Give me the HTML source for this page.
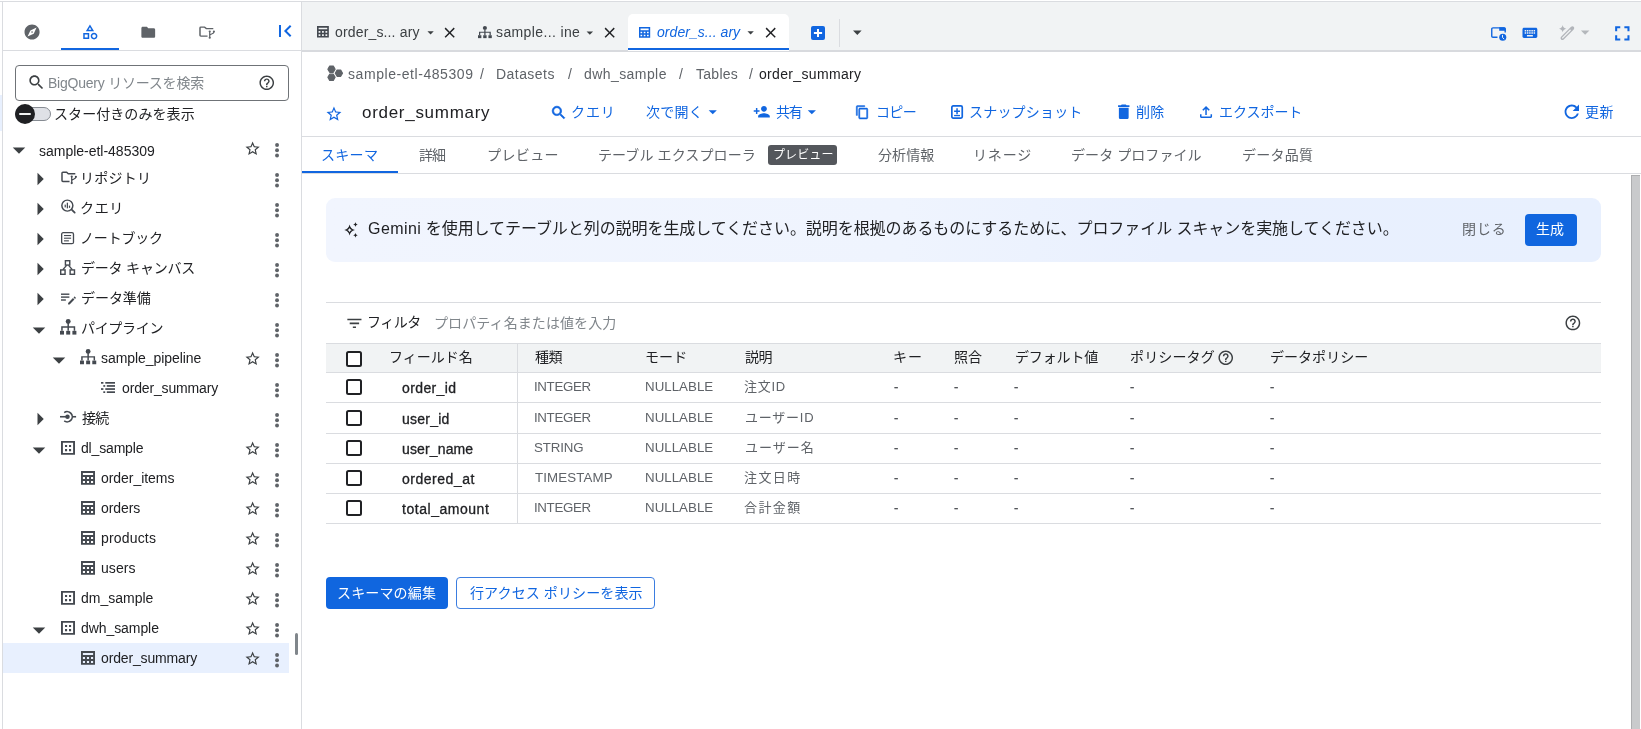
<!DOCTYPE html>
<html lang="ja"><head><meta charset="utf-8"><title>BigQuery</title>
<style>
html,body{margin:0;padding:0;background:#fff;}
body{width:1641px;height:729px;overflow:hidden;position:relative;font-family:"Liberation Sans","Noto Sans CJK JP",sans-serif;font-size:14px;color:#202124;}
.b{position:absolute;box-sizing:border-box;}
.i{position:absolute;display:block;overflow:visible;}
.t{position:absolute;white-space:nowrap;line-height:20px;height:20px;will-change:transform;}
</style></head><body>

<div class="b" style="left:0px;top:1px;width:1641px;height:1px;background:#dadce0"></div>
<div class="b" style="left:2px;top:1px;width:1px;height:728px;background:#dadce0"></div>
<div class="b" style="left:0px;top:95px;width:2px;height:36px;background:#e8f0fe"></div>
<div class="b" style="left:3px;top:50px;width:298px;height:1px;background:#dadce0"></div>
<div class="b" style="left:301px;top:2px;width:1px;height:727px;background:#dadce0"></div>
<svg class="i" style="left:22.89px;top:22.89px" width="18.12" height="18.12" viewBox="0 0 24 24" fill="#5f6368"><path d="M12 10.9c-.61 0-1.1.49-1.1 1.1s.49 1.1 1.1 1.1c.61 0 1.1-.49 1.1-1.1s-.49-1.1-1.1-1.1zM12 2C6.48 2 2 6.48 2 12s4.48 10 10 10 10-4.48 10-10S17.52 2 12 2zm2.19 12.19L6 18l3.81-8.19L18 6l-3.81 8.19z"/></svg>
<svg class="i" style="left:80.81px;top:23.34px" width="17.92" height="17.92" viewBox="0 0 24 24" fill="#1166e0"><path d="M12 2l-5.5 9h11L12 2zm0 3.84L13.93 9h-3.87L12 5.84zM17.5 13c-2.49 0-4.5 2.01-4.5 4.5s2.01 4.5 4.5 4.5 4.5-2.01 4.5-4.5-2.01-4.5-4.5-4.5zm0 7c-1.38 0-2.5-1.12-2.5-2.5s1.12-2.5 2.5-2.5 2.5 1.12 2.5 2.5-1.12 2.5-2.5 2.5zM3 21.5h8v-8H3v8zm2-6h4v4H5v-4z"/></svg>
<div class="b" style="left:61px;top:48px;width:58px;height:2px;background:#1166e0"></div>
<svg class="i" style="left:139.63px;top:23.63px" width="16.53" height="16.53" viewBox="0 0 24 24" fill="#5f6368"><path d="M10 4H4c-1.1 0-1.99.9-1.99 2L2 18c0 1.1.9 2 2 2h16c1.1 0 2-.9 2-2V8c0-1.1-.9-2-2-2h-8l-2-2z"/></svg>
<svg class="i" style="color:#5f6368;left:198.7px;top:26.3px" width="15.9" height="12.7" viewBox="0 0 16 14.2" preserveAspectRatio="none" fill="#5f6368" ><g fill="none" stroke="currentColor"><path stroke-width="1.500" stroke-linejoin="round" d="M14.400 2.900H7.300L5.700 1.300H1.900c-.5 0-.9.400-.9.900v8.200c0 .5.400.9.900.9h6.700"/><path stroke-width="1.250" d="M10.800 6.300v6.500M15 6.600c0 2.600-4.200 2-4.200 4"/></g><circle cx="10.800" cy="6" r="1.100"/><circle cx="10.800" cy="13.100" r="1.100"/><circle cx="15" cy="6.200" r="1.100"/></svg>
<svg class="i" style="left:273px;top:18.91px" width="23.98" height="23.98" viewBox="0 0 24 24" fill="#1166e0"><path d="M18.41 16.59L13.82 12l4.59-4.59L17 6l-6 6 6 6zM6 6h2v12H6z"/></svg>
<div class="b" style="left:15px;top:65px;width:274px;height:35.5px;border:1px solid #6f7377;border-radius:4px;background:#fff"></div>
<svg class="i" style="left:26.52px;top:72.52px" width="18.87" height="18.87" viewBox="0 0 24 24" fill="#3c4043"><path d="M15.5 14h-.79l-.28-.27C15.41 12.59 16 11.11 16 9.5 16 5.91 13.09 3 9.5 3S3 5.91 3 9.5 5.91 16 9.5 16c1.61 0 3.09-.59 4.23-1.57l.27.28v.79l5 4.99L20.49 19l-4.99-5zm-6 0C7.01 14 5 11.99 5 9.5S7.01 5 9.5 5 14 7.01 14 9.5 11.99 14 9.5 14z"/></svg>
<span class="t" id="t_search" style="left:48.25px;top:73.27px;font-size:14px;color:#80868b;letter-spacing:-0.225px;">BigQuery リソースを検索</span>
<svg class="i" style="left:258.24px;top:74.44px" width="17.52" height="17.52" viewBox="0 0 24 24" fill="#3c4043"><path d="M11 18h2v-2h-2v2zm1-16C6.48 2 2 6.48 2 12s4.48 10 10 10 10-4.48 10-10S17.52 2 12 2zm0 18c-4.41 0-8-3.59-8-8s3.59-8 8-8 8 3.59 8 8-3.59 8-8 8zm0-14c-2.21 0-4 1.79-4 4h2c0-1.1.9-2 2-2s2 .9 2 2c0 2-3 1.75-3 5h2c0-2.25 3-2.5 3-5 0-2.21-1.79-4-4-4z"/></svg>
<div class="b" style="left:15px;top:107px;width:36px;height:14px;background:#dfe1e6;border:1px solid #868b92;border-radius:7px"></div>
<div class="b" style="left:15px;top:104px;width:20px;height:20px;background:#1f2023;border-radius:10px"></div>
<div class="b" style="left:19px;top:112.6px;width:12px;height:2.7px;background:#f1f3f4;border-radius:1px"></div>
<span class="t" id="t_toggle" style="left:54.25px;top:104.25px;font-size:14px;color:#202124;letter-spacing:0.075px;">スター付きのみを表示</span>
<div class="b" style="left:3px;top:643px;width:286px;height:29.6px;background:#e8f0fe"></div>
<svg class="i" style="left:4px;top:135.2px" width="30" height="30" viewBox="0 0 24 24" fill="#3c4043"><path d="M7 10l5 5 5-5z"/></svg>
<span class="t" id="tr0" style="left:39px;top:141.25px;font-size:14px;color:#202124;letter-spacing:-0.014px;">sample-etl-485309</span>
<svg class="i" style="left:244.49px;top:140.44px" width="17.23" height="17.23" viewBox="0 0 24 24" fill="#3c4043"><path d="M22 9.24l-7.19-.62L12 2 9.19 8.63 2 9.24l5.46 4.73L5.82 21 12 17.27 18.18 21l-1.63-7.03L22 9.24zM12 15.4l-3.76 2.27 1-4.28-3.32-2.88 4.38-.38L12 6.1l1.71 4.04 4.38.38-3.32 2.88 1 4.28L12 15.4z"/></svg>
<svg class="i" style="color:#5f6368;left:274.95px;top:142.75px" width="4.1" height="14.5" viewBox="0 0 4.1 14.5" preserveAspectRatio="none" fill="#5f6368"><circle cx="2.050" cy="2.050" r="1.950"/><circle cx="2.050" cy="7.250" r="1.950"/><circle cx="2.050" cy="12.450" r="1.950"/></svg>
<svg class="i" style="left:25px;top:163.75px" width="30" height="30" viewBox="0 0 24 24" fill="#3c4043"><path d="M10 17l5-5-5-5v10z"/></svg>
<svg class="i" style="color:#444950;left:60.6px;top:171.25px" width="15.9" height="13.15" viewBox="0 0 16 14.2" preserveAspectRatio="none" fill="#444950"><g fill="none" stroke="currentColor"><path stroke-width="1.500" stroke-linejoin="round" d="M14.400 2.900H7.300L5.700 1.300H1.900c-.5 0-.9.400-.9.900v8.200c0 .5.400.9.900.9h6.700"/><path stroke-width="1.250" d="M10.800 6.300v6.500M15 6.600c0 2.600-4.200 2-4.200 4"/></g><circle cx="10.800" cy="6" r="1.100"/><circle cx="10.800" cy="13.100" r="1.100"/><circle cx="15" cy="6.200" r="1.100"/></svg>
<span class="t" id="tr1" style="left:80px;top:167.5px;font-size:14px;color:#202124;letter-spacing:0.28px;">リポジトリ</span>
<svg class="i" style="color:#5f6368;left:274.95px;top:172.75px" width="4.1" height="14.5" viewBox="0 0 4.1 14.5" preserveAspectRatio="none" fill="#5f6368"><circle cx="2.050" cy="2.050" r="1.950"/><circle cx="2.050" cy="7.250" r="1.950"/><circle cx="2.050" cy="12.450" r="1.950"/></svg>
<svg class="i" style="left:25px;top:193.6px" width="30" height="30" viewBox="0 0 24 24" fill="#3c4043"><path d="M10 17l5-5-5-5v10z"/></svg>
<svg class="i" style="color:#444950;left:60.6px;top:199.4px" width="14.65" height="14.6" viewBox="0 0 15 15" preserveAspectRatio="none" fill="#444950"><circle cx="6.500" cy="6.800" r="5.650" fill="none" stroke="currentColor" stroke-width="1.500"/><path d="M10.300 11.500l1.300-1.300 3.100 3.100c.36.360.36.940 0 1.300s-.940.360-1.300 0z"/><rect x="3.700" y="5.800" width="1.250" height="2.800"/><rect x="5.900" y="3.800" width="1.250" height="5.800"/><rect x="8.100" y="6.800" width="1.250" height="2.300"/></svg>
<span class="t" id="tr2" style="left:80px;top:197.5px;font-size:14px;color:#202124;letter-spacing:0.675px;">クエリ</span>
<svg class="i" style="color:#5f6368;left:274.95px;top:202.75px" width="4.1" height="14.5" viewBox="0 0 4.1 14.5" preserveAspectRatio="none" fill="#5f6368"><circle cx="2.050" cy="2.050" r="1.950"/><circle cx="2.050" cy="7.250" r="1.950"/><circle cx="2.050" cy="12.450" r="1.950"/></svg>
<svg class="i" style="left:25px;top:224px" width="30" height="30" viewBox="0 0 24 24" fill="#3c4043"><path d="M10 17l5-5-5-5v10z"/></svg>
<svg class="i" style="color:#444950;left:61.25px;top:231.6px" width="13.15" height="12.3" viewBox="0 0 13 12.3" preserveAspectRatio="none" fill="#444950"><rect x=".65" y=".65" width="11.700" height="11" rx="1.500" fill="none" stroke="currentColor" stroke-width="1.300"/><rect x="3" y="3" width="7" height="1.100"/><rect x="3" y="5.650" width="7" height="1.100"/><rect x="3" y="8.300" width="4.800" height="1.100"/></svg>
<span class="t" id="tr3" style="left:80px;top:227.5px;font-size:14px;color:#202124;letter-spacing:-0.18px;">ノートブック</span>
<svg class="i" style="color:#5f6368;left:274.95px;top:232.75px" width="4.1" height="14.5" viewBox="0 0 4.1 14.5" preserveAspectRatio="none" fill="#5f6368"><circle cx="2.050" cy="2.050" r="1.950"/><circle cx="2.050" cy="7.250" r="1.950"/><circle cx="2.050" cy="12.450" r="1.950"/></svg>
<svg class="i" style="left:25px;top:253.8px" width="30" height="30" viewBox="0 0 24 24" fill="#3c4043"><path d="M10 17l5-5-5-5v10z"/></svg>
<svg class="i" style="color:#444950;left:60.4px;top:260.4px" width="15.2" height="15" viewBox="0 0 15 14.8" preserveAspectRatio="none" fill="#444950"><g fill="none" stroke="currentColor" stroke-width="1.400"><rect x="5.350" y=".7" width="4.300" height="4.300"/><rect x=".7" y="9.800" width="4.300" height="4.300"/><rect x="10" y="9.800" width="4.300" height="4.300"/><path d="M6.500 5.300L2.850 9.500M8.500 5.300l3.650 4.200"/></g></svg>
<span class="t" id="tr4" style="left:81px;top:257.5px;font-size:14px;color:#202124;letter-spacing:-0.197px;">データ キャンバス</span>
<svg class="i" style="color:#5f6368;left:274.95px;top:262.75px" width="4.1" height="14.5" viewBox="0 0 4.1 14.5" preserveAspectRatio="none" fill="#5f6368"><circle cx="2.050" cy="2.050" r="1.950"/><circle cx="2.050" cy="7.250" r="1.950"/><circle cx="2.050" cy="12.450" r="1.950"/></svg>
<svg class="i" style="left:25px;top:284px" width="30" height="30" viewBox="0 0 24 24" fill="#3c4043"><path d="M10 17l5-5-5-5v10z"/></svg>
<svg class="i" style="color:#444950;left:60.6px;top:293.25px" width="14.8" height="11.5" viewBox="0 0 15.2 11.5" preserveAspectRatio="none" fill="#444950"><rect x="0" y=".5" width="8.600" height="1.400"/><rect x="0" y="3.400" width="8.600" height="1.400"/><rect x="0" y="6.300" width="5" height="1.400"/><path d="M7.300 11.500v-1.500l5-5 1.500 1.500-5 5z M12.900 4.400l.7-.7c.2-.2.500-.2.700 0l.8.800c.2.200.2.500 0 .7l-.7.700z"/></svg>
<span class="t" id="tr5" style="left:81px;top:287.5px;font-size:14px;color:#202124;letter-spacing:-0.055px;">データ準備</span>
<svg class="i" style="color:#5f6368;left:274.95px;top:292.75px" width="4.1" height="14.5" viewBox="0 0 4.1 14.5" preserveAspectRatio="none" fill="#5f6368"><circle cx="2.050" cy="2.050" r="1.950"/><circle cx="2.050" cy="7.250" r="1.950"/><circle cx="2.050" cy="12.450" r="1.950"/></svg>
<svg class="i" style="left:24px;top:315px" width="30" height="30" viewBox="0 0 24 24" fill="#3c4043"><path d="M7 10l5 5 5-5z"/></svg>
<svg class="i" style="color:#444950;left:59.6px;top:318.9px" width="16.4" height="15.6" viewBox="0 0 16.4 15.4" preserveAspectRatio="none" fill="#444950"><circle cx="8.200" cy="2.450" r="2.450"/><path d="M7.450 4h1.500v3.200h6.250v4.500h-1.500v-3h-4.750v3h-1.500v-3H2.700v3H1.200V7.200h6.250z"/><rect x="0" y="11.700" width="4" height="3.700"/><rect x="6.200" y="11.700" width="4" height="3.700"/><rect x="12.400" y="11.700" width="4" height="3.700"/></svg>
<span class="t" id="tr6" style="left:80.5px;top:317.5px;font-size:14px;color:#202124;letter-spacing:-0.315px;">パイプライン</span>
<svg class="i" style="color:#5f6368;left:274.95px;top:322.75px" width="4.1" height="14.5" viewBox="0 0 4.1 14.5" preserveAspectRatio="none" fill="#5f6368"><circle cx="2.050" cy="2.050" r="1.950"/><circle cx="2.050" cy="7.250" r="1.950"/><circle cx="2.050" cy="12.450" r="1.950"/></svg>
<svg class="i" style="left:44px;top:345px" width="30" height="30" viewBox="0 0 24 24" fill="#3c4043"><path d="M7 10l5 5 5-5z"/></svg>
<svg class="i" style="color:#444950;left:79.75px;top:349.25px" width="16.25" height="15.25" viewBox="0 0 16.4 15.4" preserveAspectRatio="none" fill="#444950"><circle cx="8.200" cy="2.450" r="2.450"/><path d="M7.450 4h1.500v3.200h6.250v4.500h-1.500v-3h-4.750v3h-1.500v-3H2.700v3H1.200V7.200h6.250z"/><rect x="0" y="11.700" width="4" height="3.700"/><rect x="6.200" y="11.700" width="4" height="3.700"/><rect x="12.400" y="11.700" width="4" height="3.700"/></svg>
<span class="t" id="tr7" style="left:101px;top:348.22px;font-size:14px;color:#202124;letter-spacing:-0.064px;">sample_pipeline</span>
<svg class="i" style="left:244.49px;top:350.44px" width="17.23" height="17.23" viewBox="0 0 24 24" fill="#3c4043"><path d="M22 9.24l-7.19-.62L12 2 9.19 8.63 2 9.24l5.46 4.73L5.82 21 12 17.27 18.18 21l-1.63-7.03L22 9.24zM12 15.4l-3.76 2.27 1-4.28-3.32-2.88 4.38-.38L12 6.1l1.71 4.04 4.38.38-3.32 2.88 1 4.28L12 15.4z"/></svg>
<svg class="i" style="color:#5f6368;left:274.95px;top:352.75px" width="4.1" height="14.5" viewBox="0 0 4.1 14.5" preserveAspectRatio="none" fill="#5f6368"><circle cx="2.050" cy="2.050" r="1.950"/><circle cx="2.050" cy="7.250" r="1.950"/><circle cx="2.050" cy="12.450" r="1.950"/></svg>
<svg class="i" style="color:#444950;left:101.1px;top:382px" width="14" height="11" viewBox="0 0 14 11" preserveAspectRatio="none" fill="#444950"><rect x="4.300" y="0" width="9.700" height="1.700"/><rect x="5.800" y="3.100" width="8.200" height="1.700"/><rect x="4.300" y="6.200" width="9.700" height="1.700"/><rect x="5.800" y="9.300" width="8.200" height="1.700"/><rect x="0" y="0" width="2.400" height="1.700"/><rect x="2.300" y="3.100" width="1.900" height="1.700"/><rect x="0" y="6.200" width="2.400" height="1.700"/><rect x="2.300" y="9.300" width="1.900" height="1.700"/></svg>
<span class="t" id="tr8" style="left:122px;top:378.22px;font-size:14px;color:#202124;letter-spacing:-0.15px;">order_summary</span>
<svg class="i" style="color:#5f6368;left:274.95px;top:382.75px" width="4.1" height="14.5" viewBox="0 0 4.1 14.5" preserveAspectRatio="none" fill="#5f6368"><circle cx="2.050" cy="2.050" r="1.950"/><circle cx="2.050" cy="7.250" r="1.950"/><circle cx="2.050" cy="12.450" r="1.950"/></svg>
<svg class="i" style="left:25px;top:403.8px" width="30" height="30" viewBox="0 0 24 24" fill="#3c4043"><path d="M10 17l5-5-5-5v10z"/></svg>
<svg class="i" style="color:#444950;left:59.9px;top:411.1px" width="16.1" height="11.7" viewBox="0 0 16.1 11.7" preserveAspectRatio="none" fill="#444950"><rect x="0" y="4.950" width="6.300" height="1.600"/><rect x="12.600" y="4.950" width="3.500" height="1.600"/><circle cx="7.500" cy="5.750" r="2.250"/><path d="M4.200 1.600A5.100 5.100 0 1 1 4.200 9.900" fill="none" stroke="currentColor" stroke-width="1.600"/></svg>
<span class="t" id="tr9" style="left:81.5px;top:407.5px;font-size:14px;color:#202124;letter-spacing:-0.675px;">接続</span>
<svg class="i" style="color:#5f6368;left:274.95px;top:412.75px" width="4.1" height="14.5" viewBox="0 0 4.1 14.5" preserveAspectRatio="none" fill="#5f6368"><circle cx="2.050" cy="2.050" r="1.950"/><circle cx="2.050" cy="7.250" r="1.950"/><circle cx="2.050" cy="12.450" r="1.950"/></svg>
<svg class="i" style="left:24px;top:435px" width="30" height="30" viewBox="0 0 24 24" fill="#3c4043"><path d="M7 10l5 5 5-5z"/></svg>
<svg class="i" style="color:#444950;left:61px;top:441.1px" width="14" height="13.8" viewBox="0 0 14 14" preserveAspectRatio="none" fill="#444950"><path fill-rule="evenodd" d="M0 0h14v14H0z M1.900 1.900v10.200h10.200V1.900z"/><path d="M4 4.100h2.100v2.100H4z M8 4.100h2.100v2.100H8z M4 8.200h2.100v2.100H4z M8 8.200h2.100v2.100H8z"/></svg>
<span class="t" id="tr10" style="left:81px;top:438.22px;font-size:14px;color:#202124;letter-spacing:-0.168px;">dl_sample</span>
<svg class="i" style="left:244.49px;top:440.44px" width="17.23" height="17.23" viewBox="0 0 24 24" fill="#3c4043"><path d="M22 9.24l-7.19-.62L12 2 9.19 8.63 2 9.24l5.46 4.73L5.82 21 12 17.27 18.18 21l-1.63-7.03L22 9.24zM12 15.4l-3.76 2.27 1-4.28-3.32-2.88 4.38-.38L12 6.1l1.71 4.04 4.38.38-3.32 2.88 1 4.28L12 15.4z"/></svg>
<svg class="i" style="color:#5f6368;left:274.95px;top:442.75px" width="4.1" height="14.5" viewBox="0 0 4.1 14.5" preserveAspectRatio="none" fill="#5f6368"><circle cx="2.050" cy="2.050" r="1.950"/><circle cx="2.050" cy="7.250" r="1.950"/><circle cx="2.050" cy="12.450" r="1.950"/></svg>
<svg class="i" style="color:#444950;left:81px;top:471.1px" width="14" height="13.8" viewBox="0 0 14 14" preserveAspectRatio="none" fill="#444950"><path fill-rule="evenodd" d="M0 0h14v14H0z M1.9 2h10.200v2.100H1.900z M1.900 6.100h2.100v2H1.900z M5.950 6.100h2.100v2H5.950z M10 6.100h2.100v2H10z M1.900 10.100h2.100v2H1.900z M5.950 10.100h2.100v2H5.950z M10 10.100h2.100v2H10z"/></svg>
<span class="t" id="tr11" style="left:101px;top:468.22px;font-size:14px;color:#202124;letter-spacing:-0.045px;">order_items</span>
<svg class="i" style="left:244.49px;top:470.44px" width="17.23" height="17.23" viewBox="0 0 24 24" fill="#3c4043"><path d="M22 9.24l-7.19-.62L12 2 9.19 8.63 2 9.24l5.46 4.73L5.82 21 12 17.27 18.18 21l-1.63-7.03L22 9.24zM12 15.4l-3.76 2.27 1-4.28-3.32-2.88 4.38-.38L12 6.1l1.71 4.04 4.38.38-3.32 2.88 1 4.28L12 15.4z"/></svg>
<svg class="i" style="color:#5f6368;left:274.95px;top:472.75px" width="4.1" height="14.5" viewBox="0 0 4.1 14.5" preserveAspectRatio="none" fill="#5f6368"><circle cx="2.050" cy="2.050" r="1.950"/><circle cx="2.050" cy="7.250" r="1.950"/><circle cx="2.050" cy="12.450" r="1.950"/></svg>
<svg class="i" style="color:#444950;left:81px;top:501px" width="14" height="13.85" viewBox="0 0 14 14" preserveAspectRatio="none" fill="#444950"><path fill-rule="evenodd" d="M0 0h14v14H0z M1.9 2h10.200v2.100H1.900z M1.900 6.100h2.100v2H1.900z M5.950 6.100h2.100v2H5.950z M10 6.100h2.100v2H10z M1.900 10.100h2.100v2H1.900z M5.950 10.100h2.100v2H5.950z M10 10.100h2.100v2H10z"/></svg>
<span class="t" id="tr12" style="left:101px;top:498.22px;font-size:14px;color:#202124;letter-spacing:-0.09px;">orders</span>
<svg class="i" style="left:244.49px;top:500.44px" width="17.23" height="17.23" viewBox="0 0 24 24" fill="#3c4043"><path d="M22 9.24l-7.19-.62L12 2 9.19 8.63 2 9.24l5.46 4.73L5.82 21 12 17.27 18.18 21l-1.63-7.03L22 9.24zM12 15.4l-3.76 2.27 1-4.28-3.32-2.88 4.38-.38L12 6.1l1.71 4.04 4.38.38-3.32 2.88 1 4.28L12 15.4z"/></svg>
<svg class="i" style="color:#5f6368;left:274.95px;top:502.75px" width="4.1" height="14.5" viewBox="0 0 4.1 14.5" preserveAspectRatio="none" fill="#5f6368"><circle cx="2.050" cy="2.050" r="1.950"/><circle cx="2.050" cy="7.250" r="1.950"/><circle cx="2.050" cy="12.450" r="1.950"/></svg>
<svg class="i" style="color:#444950;left:81px;top:531px" width="14" height="13.85" viewBox="0 0 14 14" preserveAspectRatio="none" fill="#444950"><path fill-rule="evenodd" d="M0 0h14v14H0z M1.9 2h10.200v2.100H1.900z M1.900 6.100h2.100v2H1.900z M5.950 6.100h2.100v2H5.950z M10 6.100h2.100v2H10z M1.900 10.100h2.100v2H1.900z M5.950 10.100h2.100v2H5.950z M10 10.100h2.100v2H10z"/></svg>
<span class="t" id="tr13" style="left:101px;top:528.22px;font-size:14px;color:#202124;letter-spacing:0.171px;">products</span>
<svg class="i" style="left:244.49px;top:530.44px" width="17.23" height="17.23" viewBox="0 0 24 24" fill="#3c4043"><path d="M22 9.24l-7.19-.62L12 2 9.19 8.63 2 9.24l5.46 4.73L5.82 21 12 17.27 18.18 21l-1.63-7.03L22 9.24zM12 15.4l-3.76 2.27 1-4.28-3.32-2.88 4.38-.38L12 6.1l1.71 4.04 4.38.38-3.32 2.88 1 4.28L12 15.4z"/></svg>
<svg class="i" style="color:#5f6368;left:274.95px;top:532.75px" width="4.1" height="14.5" viewBox="0 0 4.1 14.5" preserveAspectRatio="none" fill="#5f6368"><circle cx="2.050" cy="2.050" r="1.950"/><circle cx="2.050" cy="7.250" r="1.950"/><circle cx="2.050" cy="12.450" r="1.950"/></svg>
<svg class="i" style="color:#444950;left:81px;top:561px" width="14" height="13.85" viewBox="0 0 14 14" preserveAspectRatio="none" fill="#444950"><path fill-rule="evenodd" d="M0 0h14v14H0z M1.9 2h10.200v2.100H1.900z M1.900 6.100h2.100v2H1.900z M5.950 6.100h2.100v2H5.950z M10 6.100h2.100v2H10z M1.900 10.100h2.100v2H1.900z M5.950 10.100h2.100v2H5.950z M10 10.100h2.100v2H10z"/></svg>
<span class="t" id="tr14" style="left:101px;top:558.22px;font-size:14px;color:#202124;letter-spacing:0.055px;">users</span>
<svg class="i" style="left:244.49px;top:560.44px" width="17.23" height="17.23" viewBox="0 0 24 24" fill="#3c4043"><path d="M22 9.24l-7.19-.62L12 2 9.19 8.63 2 9.24l5.46 4.73L5.82 21 12 17.27 18.18 21l-1.63-7.03L22 9.24zM12 15.4l-3.76 2.27 1-4.28-3.32-2.88 4.38-.38L12 6.1l1.71 4.04 4.38.38-3.32 2.88 1 4.28L12 15.4z"/></svg>
<svg class="i" style="color:#5f6368;left:274.95px;top:562.75px" width="4.1" height="14.5" viewBox="0 0 4.1 14.5" preserveAspectRatio="none" fill="#5f6368"><circle cx="2.050" cy="2.050" r="1.950"/><circle cx="2.050" cy="7.250" r="1.950"/><circle cx="2.050" cy="12.450" r="1.950"/></svg>
<svg class="i" style="color:#444950;left:61px;top:591.1px" width="14" height="13.8" viewBox="0 0 14 14" preserveAspectRatio="none" fill="#444950"><path fill-rule="evenodd" d="M0 0h14v14H0z M1.900 1.900v10.200h10.200V1.900z"/><path d="M4 4.100h2.100v2.100H4z M8 4.100h2.100v2.100H8z M4 8.200h2.100v2.100H4z M8 8.200h2.100v2.100H8z"/></svg>
<span class="t" id="tr15" style="left:81px;top:588.22px;font-size:14px;color:#202124;letter-spacing:-0.001px;">dm_sample</span>
<svg class="i" style="left:244.49px;top:590.44px" width="17.23" height="17.23" viewBox="0 0 24 24" fill="#3c4043"><path d="M22 9.24l-7.19-.62L12 2 9.19 8.63 2 9.24l5.46 4.73L5.82 21 12 17.27 18.18 21l-1.63-7.03L22 9.24zM12 15.4l-3.76 2.27 1-4.28-3.32-2.88 4.38-.38L12 6.1l1.71 4.04 4.38.38-3.32 2.88 1 4.28L12 15.4z"/></svg>
<svg class="i" style="color:#5f6368;left:274.95px;top:592.75px" width="4.1" height="14.5" viewBox="0 0 4.1 14.5" preserveAspectRatio="none" fill="#5f6368"><circle cx="2.050" cy="2.050" r="1.950"/><circle cx="2.050" cy="7.250" r="1.950"/><circle cx="2.050" cy="12.450" r="1.950"/></svg>
<svg class="i" style="left:24px;top:615px" width="30" height="30" viewBox="0 0 24 24" fill="#3c4043"><path d="M7 10l5 5 5-5z"/></svg>
<svg class="i" style="color:#444950;left:61px;top:621.1px" width="14" height="13.8" viewBox="0 0 14 14" preserveAspectRatio="none" fill="#444950"><path fill-rule="evenodd" d="M0 0h14v14H0z M1.900 1.900v10.200h10.200V1.900z"/><path d="M4 4.100h2.100v2.100H4z M8 4.100h2.100v2.100H8z M4 8.200h2.100v2.100H4z M8 8.200h2.100v2.100H8z"/></svg>
<span class="t" id="tr16" style="left:81px;top:618.22px;font-size:14px;color:#202124;letter-spacing:-0.075px;">dwh_sample</span>
<svg class="i" style="left:244.49px;top:620.44px" width="17.23" height="17.23" viewBox="0 0 24 24" fill="#3c4043"><path d="M22 9.24l-7.19-.62L12 2 9.19 8.63 2 9.24l5.46 4.73L5.82 21 12 17.27 18.18 21l-1.63-7.03L22 9.24zM12 15.4l-3.76 2.27 1-4.28-3.32-2.88 4.38-.38L12 6.1l1.71 4.04 4.38.38-3.32 2.88 1 4.28L12 15.4z"/></svg>
<svg class="i" style="color:#5f6368;left:274.95px;top:622.75px" width="4.1" height="14.5" viewBox="0 0 4.1 14.5" preserveAspectRatio="none" fill="#5f6368"><circle cx="2.050" cy="2.050" r="1.950"/><circle cx="2.050" cy="7.250" r="1.950"/><circle cx="2.050" cy="12.450" r="1.950"/></svg>
<svg class="i" style="color:#444950;left:81px;top:651px" width="14" height="13.85" viewBox="0 0 14 14" preserveAspectRatio="none" fill="#444950"><path fill-rule="evenodd" d="M0 0h14v14H0z M1.9 2h10.200v2.100H1.900z M1.900 6.100h2.100v2H1.900z M5.950 6.100h2.100v2H5.950z M10 6.100h2.100v2H10z M1.900 10.100h2.100v2H1.900z M5.950 10.100h2.100v2H5.950z M10 10.100h2.100v2H10z"/></svg>
<span class="t" id="tr17" style="left:101px;top:648.22px;font-size:14px;color:#202124;letter-spacing:-0.15px;">order_summary</span>
<svg class="i" style="left:244.49px;top:650.44px" width="17.23" height="17.23" viewBox="0 0 24 24" fill="#3c4043"><path d="M22 9.24l-7.19-.62L12 2 9.19 8.63 2 9.24l5.46 4.73L5.82 21 12 17.27 18.18 21l-1.63-7.03L22 9.24zM12 15.4l-3.76 2.27 1-4.28-3.32-2.88 4.38-.38L12 6.1l1.71 4.04 4.38.38-3.32 2.88 1 4.28L12 15.4z"/></svg>
<svg class="i" style="color:#5f6368;left:274.95px;top:652.75px" width="4.1" height="14.5" viewBox="0 0 4.1 14.5" preserveAspectRatio="none" fill="#5f6368"><circle cx="2.050" cy="2.050" r="1.950"/><circle cx="2.050" cy="7.250" r="1.950"/><circle cx="2.050" cy="12.450" r="1.950"/></svg>
<div class="b" style="left:295px;top:633px;width:3px;height:22px;background:#80868b;border-radius:1.5px"></div>
<div class="b" style="left:302px;top:2px;width:1339px;height:48px;background:#f1f3f4"></div>
<div class="b" style="left:302px;top:50px;width:1339px;height:2px;background:#d8dade"></div>
<svg class="i" style="color:#444950;left:316.9px;top:26.25px" width="11.85" height="11.5" viewBox="0 0 14 14" preserveAspectRatio="none" fill="#444950"><path fill-rule="evenodd" d="M0 0h14v14H0z M1.9 2h10.200v2.100H1.900z M1.900 6.100h2.100v2H1.900z M5.950 6.100h2.100v2H5.950z M10 6.100h2.100v2H10z M1.900 10.100h2.100v2H1.900z M5.950 10.100h2.100v2H5.950z M10 10.100h2.100v2H10z"/></svg>
<span class="t" id="tab1" style="left:334.8px;top:21.95px;font-size:14px;color:#3c4043;letter-spacing:0.152px;">order_s... ary</span>
<svg class="i" style="left:422.58px;top:24.79px" width="15.18" height="15.18" viewBox="0 0 24 24" fill="#3c4043"><path d="M7 10l5 5 5-5z"/></svg>
<svg class="i" style="left:441.2px;top:24.07px" width="17.36" height="17.36" viewBox="0 0 24 24" fill="#202124"><path d="M19 6.41L17.59 5 12 10.59 6.41 5 5 6.41 10.59 12 5 17.59 6.41 19 12 13.41 17.59 19 19 17.59 13.41 12z"/></svg>
<svg class="i" style="color:#444950;left:478.1px;top:25.6px" width="13.8" height="12.15" viewBox="0 0 16.4 15.4" preserveAspectRatio="none" fill="#444950"><circle cx="8.200" cy="2.450" r="2.450"/><path d="M7.450 4h1.500v3.200h6.250v4.500h-1.500v-3h-4.750v3h-1.500v-3H2.700v3H1.200V7.200h6.250z"/><rect x="0" y="11.700" width="4" height="3.700"/><rect x="6.200" y="11.700" width="4" height="3.700"/><rect x="12.400" y="11.700" width="4" height="3.700"/></svg>
<span class="t" id="tab2" style="left:496px;top:21.95px;font-size:14px;color:#3c4043;letter-spacing:0.375px;">sample... ine</span>
<svg class="i" style="left:582.2px;top:24.57px" width="15.6" height="15.6" viewBox="0 0 24 24" fill="#3c4043"><path d="M7 10l5 5 5-5z"/></svg>
<svg class="i" style="left:601.45px;top:24.07px" width="17.36" height="17.36" viewBox="0 0 24 24" fill="#202124"><path d="M19 6.41L17.59 5 12 10.59 6.41 5 5 6.41 10.59 12 5 17.59 6.41 19 12 13.41 17.59 19 19 17.59 13.41 12z"/></svg>
<div class="b" style="left:628px;top:14px;width:161px;height:37px;background:#fff;border-radius:5px 5px 0 0"></div>
<div class="b" style="left:628px;top:48px;width:161px;height:2px;background:#1166e0"></div>
<svg class="i" style="color:#1166e0;left:639.4px;top:26.5px" width="11.2" height="10.75" viewBox="0 0 14 14" preserveAspectRatio="none" fill="#1166e0"><path fill-rule="evenodd" d="M0 0h14v14H0z M1.9 2h10.200v2.100H1.900z M1.900 6.100h2.100v2H1.900z M5.950 6.100h2.100v2H5.950z M10 6.100h2.100v2H10z M1.900 10.100h2.100v2H1.900z M5.950 10.100h2.100v2H5.950z M10 10.100h2.100v2H10z"/></svg>
<span class="t" id="tab3" style="left:656.8px;top:21.95px;font-size:14px;color:#1166e0;letter-spacing:0.049px;font-style:italic;">order_s... ary</span>
<svg class="i" style="left:743.43px;top:24.76px" width="15.24" height="15.24" viewBox="0 0 24 24" fill="#3c4043"><path d="M7 10l5 5 5-5z"/></svg>
<svg class="i" style="left:762.45px;top:24.07px" width="17.36" height="17.36" viewBox="0 0 24 24" fill="#202124"><path d="M19 6.41L17.59 5 12 10.59 6.41 5 5 6.41 10.59 12 5 17.59 6.41 19 12 13.41 17.59 19 19 17.59 13.41 12z"/></svg>
<svg class="i" style="color:#1166e0;left:811.05px;top:25.95px" width="14" height="14" viewBox="0 0 14 14" preserveAspectRatio="none" fill="#1166e0"><rect x="0" y="0" width="14" height="14" rx="2"/><path d="M6 3h2v3h3.100v2H8v3H6V8H2.900V6H6z" fill="#fff"/></svg>
<div class="b" style="left:839px;top:19px;width:1px;height:28px;background:#dadce0"></div>
<svg class="i" style="left:846.73px;top:22.18px" width="20.64" height="20.64" viewBox="0 0 24 24" fill="#3c4043"><path d="M7 10l5 5 5-5z"/></svg>
<svg class="i" style="color:#1166e0;left:1490.5px;top:27.2px" width="15.3" height="13.8" viewBox="0 0 15.3 13.8" preserveAspectRatio="none" fill="#1166e0"><path d="M6.500 10.200H2Q.75 10.200 .75 9V2.100Q.75 .9 2 .9H13Q14.200 .9 14.200 2.100V5.600" fill="none" stroke="currentColor" stroke-width="1.400"/><path d="M8.200 .3H13.200Q14.800 .3 14.800 1.900V3.700H8.200z"/><circle cx="11.750" cy="10.250" r="3.550"/><path d="M11.500 8.300V10.500L12.900 11.800" fill="none" stroke="#f1f3f4" stroke-width="1" stroke-linecap="round"/></svg>
<svg class="i" style="left:1521.14px;top:24.02px" width="17.81" height="17.81" viewBox="0 0 24 24" fill="#1166e0"><path d="M20 5H4c-1.1 0-1.99.9-1.99 2L2 17c0 1.1.9 2 2 2h16c1.1 0 2-.9 2-2V7c0-1.1-.9-2-2-2zm-9 3h2v2h-2V8zm0 3h2v2h-2v-2zM8 8h2v2H8V8zm0 3h2v2H8v-2zm-1 2H5v-2h2v2zm0-3H5V8h2v2zm9 7H8v-2h8v2zm0-4h-2v-2h2v2zm0-3h-2V8h2v2zm3 3h-2v-2h2v2zm0-3h-2V8h2v2z"/></svg>
<svg class="i" style="color:#b2b5ba;left:1559.1px;top:24.9px" width="15.3" height="15" viewBox="0 0 15.3 15" preserveAspectRatio="none" fill="#b2b5ba"><path d="M3.65 0Q4.2 3.1 7.3 3.65 4.2 4.2 3.65 7.3 3.1 4.2 0 3.65 3.1 3.1 3.65 0z"/><path d="M3.4 13.100L13.400 3.100" fill="none" stroke="currentColor" stroke-width="3.700" stroke-linecap="round"/><path d="M3.600 12.900L11.200 5.300" fill="none" stroke="#f1f3f4" stroke-width="1.300" stroke-linecap="round"/></svg>
<svg class="i" style="left:1574.91px;top:22.24px" width="20.28" height="20.28" viewBox="0 0 24 24" fill="#b4b7bb"><path d="M7 10l5 5 5-5z"/></svg>
<svg class="i" style="left:1609.8px;top:20.68px" width="24.64" height="24.64" viewBox="0 0 24 24" fill="#1166e0"><path d="M7 14H5v5h5v-2H7v-3zm-2-4h2V7h3V5H5v5zm12 7h-3v2h5v-5h-2v3zM14 5v2h3v3h2V5h-5z"/></svg>
<svg class="i" style="color:#5f6368;left:326.9px;top:64.75px" width="16.2" height="16.5" viewBox="0 0 16.2 16.5" preserveAspectRatio="none" fill="#5f6368"><path stroke="currentColor" stroke-width="1.200" stroke-linejoin="round" d="M8.10 4.20 L6.30 7.32 L2.70 7.32 L0.90 4.20 L2.70 1.08 L6.30 1.08z"/><path stroke="currentColor" stroke-width="1.200" stroke-linejoin="round" d="M8.10 12.30 L6.30 15.42 L2.70 15.42 L0.90 12.30 L2.70 9.18 L6.30 9.18z"/><path stroke="currentColor" stroke-width="1.200" stroke-linejoin="round" d="M15.50 8.20 L13.70 11.32 L10.10 11.32 L8.30 8.20 L10.10 5.08 L13.70 5.08z"/></svg>
<span class="t" id="bc1" style="left:348px;top:64.1px;font-size:14px;color:#5f6368;letter-spacing:0.561px;">sample-etl-485309</span>
<span class="t" id="bcs1" style="left:480px;top:64.1px;font-size:14px;color:#5f6368;">/</span>
<span class="t" id="bc2" style="left:496px;top:64.1px;font-size:14px;color:#5f6368;letter-spacing:0.45px;">Datasets</span>
<span class="t" id="bcs2" style="left:567.5px;top:64.1px;font-size:14px;color:#5f6368;">/</span>
<span class="t" id="bc3" style="left:584px;top:64.1px;font-size:14px;color:#5f6368;letter-spacing:0.425px;">dwh_sample</span>
<span class="t" id="bcs3" style="left:679px;top:64.1px;font-size:14px;color:#5f6368;">/</span>
<span class="t" id="bc4" style="left:695.5px;top:64.1px;font-size:14px;color:#5f6368;letter-spacing:0.27px;">Tables</span>
<span class="t" id="bcs4" style="left:749px;top:64.1px;font-size:14px;color:#5f6368;">/</span>
<span class="t" id="bc5" style="left:758.5px;top:64.1px;font-size:14px;color:#202124;letter-spacing:0.335px;">order_summary</span>
<svg class="i" style="left:324.99px;top:104.52px" width="17.91" height="17.91" viewBox="0 0 24 24" fill="#1166e0"><path d="M22 9.24l-7.19-.62L12 2 9.19 8.63 2 9.24l5.46 4.73L5.82 21 12 17.27 18.18 21l-1.63-7.03L22 9.24zM12 15.4l-3.76 2.27 1-4.28-3.32-2.88 4.38-.38L12 6.1l1.71 4.04 4.38.38-3.32 2.88 1 4.28L12 15.4z"/></svg>
<span class="t" id="title" style="left:361.5px;top:102.75px;font-size:17px;color:#202124;letter-spacing:0.71px;line-height:24px;height:24px;margin-top:-2px;">order_summary</span>
<svg class="i" style="left:550.22px;top:103.52px" width="17.43" height="17.43" viewBox="0 0 24 24" fill="#1166e0"><path stroke="#1166e0" stroke-width="0.9" d="M15.5 14h-.79l-.28-.27C15.41 12.59 16 11.11 16 9.5 16 5.91 13.09 3 9.5 3S3 5.91 3 9.5 5.91 16 9.5 16c1.61 0 3.09-.59 4.23-1.57l.27.28v.79l5 4.99L20.49 19l-4.99-5zm-6 0C7.01 14 5 11.99 5 9.5S7.01 5 9.5 5 14 7.01 14 9.5 11.99 14 9.5 14z"/></svg>
<span class="t" id="tb1" style="left:570.5px;top:101.55px;font-size:14px;color:#1166e0;letter-spacing:0.9px;">クエリ</span>
<span class="t" id="tb2" style="left:645.75px;top:101.55px;font-size:14px;color:#1166e0;letter-spacing:0.225px;">次で開く</span>
<svg class="i" style="left:702.62px;top:101.72px" width="19.5" height="19.5" viewBox="0 0 24 24" fill="#1166e0"><path d="M7 10l5 5 5-5z"/></svg>
<svg class="i" style="left:753.23px;top:103.11px" width="17.54" height="17.54" viewBox="0 0 24 24" fill="#1166e0"><path d="M15 12c2.21 0 4-1.79 4-4s-1.79-4-4-4-4 1.79-4 4 1.79 4 4 4zm-9-2V7H4v3H1v2h3v3h2v-3h3v-2H6zm9 4c-2.67 0-8 1.34-8 4v2h16v-2c0-2.66-5.33-4-8-4z"/></svg>
<span class="t" id="tb3" style="left:775.5px;top:101.55px;font-size:14px;color:#1166e0;letter-spacing:-1.35px;">共有</span>
<svg class="i" style="left:802.21px;top:101.63px" width="19.68" height="19.68" viewBox="0 0 24 24" fill="#1166e0"><path d="M7 10l5 5 5-5z"/></svg>
<svg class="i" style="left:855.02px;top:104.54px" width="14.67" height="14.67" viewBox="0 0 24 24" fill="#1166e0"><path stroke="#1166e0" stroke-width="0.7" d="M16 1H4c-1.1 0-2 .9-2 2v14h2V3h12V1zm3 4H8c-1.1 0-2 .9-2 2v14c0 1.1.9 2 2 2h11c1.1 0 2-.9 2-2V7c0-1.1-.9-2-2-2zm0 16H8V7h11v14z"/></svg>
<span class="t" id="tb4" style="left:875.5px;top:101.55px;font-size:14px;color:#1166e0;letter-spacing:-0.675px;">コピー</span>
<svg class="i" style="color:#1166e0;left:951px;top:105px" width="12.1" height="14" viewBox="0 0 12.1 14" preserveAspectRatio="none" fill="#1166e0"><rect x=".85" y=".85" width="10.400" height="12.300" rx="1.300" fill="none" stroke="currentColor" stroke-width="1.700"/><path d="M5.300 3.300h1.500v2.200h2.200v1.500H6.800v2.200H5.300V7H3.100V5.500h2.200z"/><rect x="3.100" y="9.900" width="5.900" height="1.300"/></svg>
<span class="t" id="tb5" style="left:969px;top:101.55px;font-size:14px;color:#1166e0;letter-spacing:0.193px;">スナップショット</span>
<svg class="i" style="left:1114.28px;top:102.23px" width="19.53" height="19.53" viewBox="0 0 24 24" fill="#1166e0"><path d="M6 19c0 1.1.9 2 2 2h8c1.1 0 2-.9 2-2V7H6v12zM19 4h-3.5l-1-1h-5l-1 1H5v2h14V4z"/></svg>
<span class="t" id="tb6" style="left:1136.25px;top:101.55px;font-size:14px;color:#1166e0;letter-spacing:0.225px;">削除</span>
<svg class="i" style="left:1197.09px;top:103.14px" width="18.07" height="18.07" viewBox="0 0 24 24" fill="#1166e0"><path d="M18 15v3H6v-3H4v3c0 1.1.9 2 2 2h12c1.1 0 2-.9 2-2v-3h-2zM7 9l1.41 1.41L11 7.83V16h2V7.83l2.59 2.58L17 9l-5-5-5 5z"/></svg>
<span class="t" id="tb7" style="left:1219.25px;top:101.55px;font-size:14px;color:#1166e0;letter-spacing:-0.045px;">エクスポート</span>
<svg class="i" style="left:1561.4px;top:101px" width="21.6" height="21.6" viewBox="0 0 24 24" fill="#1166e0"><path d="M17.65 6.35C16.2 4.9 14.21 4 12 4c-4.42 0-7.99 3.58-7.99 8s3.57 8 7.99 8c3.73 0 6.84-2.55 7.73-6h-2.08c-.82 2.33-3.04 4-5.65 4-3.31 0-6-2.69-6-6s2.69-6 6-6c1.66 0 3.14.69 4.22 1.78L13 11h7V4l-2.35 2.35z"/></svg>
<span class="t" id="tb8" style="left:1584.5px;top:101.55px;font-size:14px;color:#1166e0;letter-spacing:0.45px;">更新</span>
<div class="b" style="left:302px;top:136px;width:1339px;height:1px;background:#dadce0"></div>
<span class="t" id="st1" style="left:320.5px;top:144.6px;font-size:14px;color:#1166e0;letter-spacing:0.3px;">スキーマ</span>
<span class="t" id="st2" style="left:419px;top:144.6px;font-size:14px;color:#5f6368;letter-spacing:-0.9px;">詳細</span>
<span class="t" id="st3" style="left:486.75px;top:144.6px;font-size:14px;color:#5f6368;letter-spacing:0.395px;">プレビュー</span>
<span class="t" id="st4" style="left:597.75px;top:144.6px;font-size:14px;color:#5f6368;letter-spacing:0.101px;">テーブル エクスプローラ</span>
<div class="b" style="left:768px;top:145px;width:69px;height:20px;background:#54575c;border-radius:3px"></div>
<span class="t" id="st5" style="left:773px;top:144.75px;font-size:12px;color:#fff;letter-spacing:0.115px;">プレビュー</span>
<span class="t" id="st6" style="left:877.5px;top:144.6px;font-size:14px;color:#5f6368;letter-spacing:0.075px;">分析情報</span>
<span class="t" id="st7" style="left:973.25px;top:144.6px;font-size:14px;color:#5f6368;letter-spacing:0.825px;">リネージ</span>
<span class="t" id="st8" style="left:1071px;top:144.6px;font-size:14px;color:#5f6368;letter-spacing:0.075px;">データ プロファイル</span>
<span class="t" id="st9" style="left:1242px;top:144.6px;font-size:14px;color:#5f6368;letter-spacing:0.28px;">データ品質</span>
<div class="b" style="left:302px;top:173px;width:1339px;height:1px;background:#dadce0"></div>
<div class="b" style="left:302px;top:171px;width:96px;height:2px;background:#1166e0"></div>
<div class="b" style="left:1631px;top:175px;width:9px;height:554px;background:#c9cacc;border-left:1px solid #adaeb0;border-top:1px solid #adaeb0"></div>
<div class="b" style="left:326px;top:198px;width:1275px;height:64px;background:linear-gradient(90deg,#f1f5fe 0%,#eff4fe 45%,#e9f0fe 66%,#e8f0fe 100%);border-radius:9px"></div>
<svg class="i" style="color:#202124;left:344.4px;top:222.25px" width="14.6" height="15.85" viewBox="0 0 14.6 15.9" preserveAspectRatio="none" fill="#202124"><path fill-rule="evenodd" d="M5.600 2.600c.7 3 2 4.600 5.300 5.500-3.300.9-4.600 2.500-5.300 5.500C4.900 10.600 3.600 9 .3 8.100 3.600 7.200 4.900 5.600 5.600 2.600z M5.600 5.900C5.100 7 4.500 7.600 3.400 8.100c1.100.5 1.700 1.100 2.200 2.200.5-1.100 1.100-1.700 2.200-2.200C6.700 7.600 6.100 7 5.600 5.900z"/><path d="M11.500 0c.3 1.600.9 2.200 2.500 2.500-1.600.3-2.200.9-2.500 2.500-.3-1.600-.9-2.200-2.500-2.500 1.600-.3 2.200-.9 2.500-2.500z"/><path d="M11.500 10.900c.3 1.600.9 2.200 2.500 2.500-1.600.3-2.200.9-2.500 2.500-.3-1.600-.9-2.200-2.500-2.500 1.600-.3 2.200-.9 2.500-2.500z"/></svg>
<span class="t" id="banner" style="left:367.5px;top:219.44px;font-size:16px;color:#202124;letter-spacing:-0.063px;line-height:24px;height:24px;margin-top:-2px;"><span style="letter-spacing:0.45px">Gemini</span> を使用してテーブルと列の説明を生成してください。説明を根拠のあるものにするために、プロファイル スキャンを実施してください。</span>
<span class="t" id="close" style="left:1461.5px;top:219.25px;font-size:14px;color:#5f6368;letter-spacing:0.9px;">閉じる</span>
<div class="b" style="left:1525px;top:214px;width:52.2px;height:32px;background:#1066df;border-radius:4px"></div>
<span class="t" id="gen" style="left:1536px;top:219.25px;font-size:14px;color:#fff;">生成</span>
<div class="b" style="left:326px;top:302px;width:1275px;height:1px;background:#dadce0"></div>
<svg class="i" style="left:344.72px;top:313.52px" width="18.82" height="18.82" viewBox="0 0 24 24" fill="#3c4043"><path d="M10 18h4v-2h-4v2zM3 6v2h18V6H3zm3 7h12v-2H6v2z"/></svg>
<span class="t" id="flt" style="left:367.25px;top:312.3px;font-size:14px;color:#202124;letter-spacing:-0.525px;">フィルタ</span>
<span class="t" id="fph" style="left:434.25px;top:312.95px;font-size:14px;color:#80868b;letter-spacing:0.095px;">プロパティ名または値を入力</span>
<svg class="i" style="left:1564.12px;top:314.12px" width="17.76" height="17.76" viewBox="0 0 24 24" fill="#3c4043"><path d="M11 18h2v-2h-2v2zm1-16C6.48 2 2 6.48 2 12s4.48 10 10 10 10-4.48 10-10S17.52 2 12 2zm0 18c-4.41 0-8-3.59-8-8s3.59-8 8-8 8 3.59 8 8-3.59 8-8 8zm0-14c-2.21 0-4 1.79-4 4h2c0-1.1.9-2 2-2s2 .9 2 2c0 2-3 1.75-3 5h2c0-2.25 3-2.5 3-5 0-2.21-1.79-4-4-4z"/></svg>
<div class="b" style="left:326px;top:343px;width:1275px;height:30px;background:#f1f3f4;border-top:1px solid #dadce0;border-bottom:1px solid #dadce0"></div>
<span class="t" id="h1" style="left:389px;top:347px;font-size:14px;color:#202124;">フィールド名</span>
<span class="t" id="h2" style="left:534.5px;top:347px;font-size:14px;color:#202124;letter-spacing:-0.45px;">種類</span>
<span class="t" id="h3" style="left:645px;top:347px;font-size:14px;color:#202124;letter-spacing:0.11px;">モード</span>
<span class="t" id="h4" style="left:745.3px;top:347px;font-size:14px;color:#202124;letter-spacing:-0.45px;">説明</span>
<span class="t" id="h5" style="left:893.25px;top:347px;font-size:14px;color:#202124;letter-spacing:1.125px;">キー</span>
<span class="t" id="h6" style="left:953.75px;top:347px;font-size:14px;color:#202124;">照合</span>
<span class="t" id="h7" style="left:1015px;top:347px;font-size:14px;color:#202124;letter-spacing:-0.135px;">デフォルト値</span>
<span class="t" id="h8" style="left:1130px;top:347px;font-size:14px;color:#202124;letter-spacing:0.135px;">ポリシータグ</span>
<svg class="i" style="left:1217.38px;top:349.06px" width="17.49" height="17.49" viewBox="0 0 24 24" fill="#3c4043"><path d="M11 18h2v-2h-2v2zm1-16C6.48 2 2 6.48 2 12s4.48 10 10 10 10-4.48 10-10S17.52 2 12 2zm0 18c-4.41 0-8-3.59-8-8s3.59-8 8-8 8 3.59 8 8-3.59 8-8 8zm0-14c-2.21 0-4 1.79-4 4h2c0-1.1.9-2 2-2s2 .9 2 2c0 2-3 1.75-3 5h2c0-2.25 3-2.5 3-5 0-2.21-1.79-4-4-4z"/></svg>
<span class="t" id="h9" style="left:1270px;top:347px;font-size:14px;color:#202124;letter-spacing:0.035px;">データポリシー</span>
<div class="b" style="left:517px;top:344px;width:1px;height:180px;background:#dadce0"></div>
<div class="b" style="left:326px;top:402px;width:1275px;height:1px;background:#dadce0"></div>
<span class="t" id="f0" style="left:402px;top:377.5px;font-size:14px;color:#202124;letter-spacing:0.386px;-webkit-text-stroke:0.3px #202124;">order_id</span>
<span class="t" id="ty0" style="left:533.75px;top:377.36px;font-size:13.3px;color:#5f6368;letter-spacing:-0.339px;">INTEGER</span>
<span class="t" id="md0" style="left:644.8px;top:377.36px;font-size:13.3px;color:#5f6368;letter-spacing:0.026px;">NULLABLE</span>
<span class="t" id="ds0" style="left:744.25px;top:377.14px;font-size:13px;color:#5f6368;letter-spacing:0.75px;">注文ID</span>
<span class="t" id="d0_0" style="left:894.25px;top:376.6px;font-size:13px;color:#4a4d52;-webkit-text-stroke:0.3px #4a4d52;">-</span>
<span class="t" id="d0_1" style="left:954.25px;top:376.6px;font-size:13px;color:#4a4d52;-webkit-text-stroke:0.3px #4a4d52;">-</span>
<span class="t" id="d0_2" style="left:1014.25px;top:376.6px;font-size:13px;color:#4a4d52;-webkit-text-stroke:0.3px #4a4d52;">-</span>
<span class="t" id="d0_3" style="left:1130px;top:376.6px;font-size:13px;color:#4a4d52;-webkit-text-stroke:0.3px #4a4d52;">-</span>
<span class="t" id="d0_4" style="left:1270px;top:376.6px;font-size:13px;color:#4a4d52;-webkit-text-stroke:0.3px #4a4d52;">-</span>
<div class="b" style="left:326px;top:433px;width:1275px;height:1px;background:#dadce0"></div>
<span class="t" id="f1" style="left:402px;top:408.5px;font-size:14px;color:#202124;letter-spacing:0.225px;-webkit-text-stroke:0.3px #202124;">user_id</span>
<span class="t" id="ty1" style="left:533.75px;top:408.36px;font-size:13.3px;color:#5f6368;letter-spacing:-0.339px;">INTEGER</span>
<span class="t" id="md1" style="left:644.8px;top:408.36px;font-size:13.3px;color:#5f6368;letter-spacing:0.026px;">NULLABLE</span>
<span class="t" id="ds1" style="left:745px;top:408.14px;font-size:13px;color:#5f6368;letter-spacing:0.765px;">ユーザーID</span>
<span class="t" id="d1_0" style="left:894.25px;top:407.6px;font-size:13px;color:#4a4d52;-webkit-text-stroke:0.3px #4a4d52;">-</span>
<span class="t" id="d1_1" style="left:954.25px;top:407.6px;font-size:13px;color:#4a4d52;-webkit-text-stroke:0.3px #4a4d52;">-</span>
<span class="t" id="d1_2" style="left:1014.25px;top:407.6px;font-size:13px;color:#4a4d52;-webkit-text-stroke:0.3px #4a4d52;">-</span>
<span class="t" id="d1_3" style="left:1130px;top:407.6px;font-size:13px;color:#4a4d52;-webkit-text-stroke:0.3px #4a4d52;">-</span>
<span class="t" id="d1_4" style="left:1270px;top:407.6px;font-size:13px;color:#4a4d52;-webkit-text-stroke:0.3px #4a4d52;">-</span>
<div class="b" style="left:326px;top:463px;width:1275px;height:1px;background:#dadce0"></div>
<span class="t" id="f2" style="left:402px;top:438.5px;font-size:14px;color:#202124;letter-spacing:0.14px;-webkit-text-stroke:0.3px #202124;">user_name</span>
<span class="t" id="ty2" style="left:533.75px;top:438.36px;font-size:13.3px;color:#5f6368;letter-spacing:-0.135px;">STRING</span>
<span class="t" id="md2" style="left:644.8px;top:438.36px;font-size:13.3px;color:#5f6368;letter-spacing:0.026px;">NULLABLE</span>
<span class="t" id="ds2" style="left:745px;top:438.14px;font-size:13px;color:#5f6368;letter-spacing:1.01px;">ユーザー名</span>
<span class="t" id="d2_0" style="left:894.25px;top:437.6px;font-size:13px;color:#4a4d52;-webkit-text-stroke:0.3px #4a4d52;">-</span>
<span class="t" id="d2_1" style="left:954.25px;top:437.6px;font-size:13px;color:#4a4d52;-webkit-text-stroke:0.3px #4a4d52;">-</span>
<span class="t" id="d2_2" style="left:1014.25px;top:437.6px;font-size:13px;color:#4a4d52;-webkit-text-stroke:0.3px #4a4d52;">-</span>
<span class="t" id="d2_3" style="left:1130px;top:437.6px;font-size:13px;color:#4a4d52;-webkit-text-stroke:0.3px #4a4d52;">-</span>
<span class="t" id="d2_4" style="left:1270px;top:437.6px;font-size:13px;color:#4a4d52;-webkit-text-stroke:0.3px #4a4d52;">-</span>
<div class="b" style="left:326px;top:493px;width:1275px;height:1px;background:#dadce0"></div>
<span class="t" id="f3" style="left:402px;top:468.5px;font-size:14px;color:#202124;letter-spacing:0.525px;-webkit-text-stroke:0.3px #202124;">ordered_at</span>
<span class="t" id="ty3" style="left:534.75px;top:468.36px;font-size:13.3px;color:#5f6368;letter-spacing:0.13px;">TIMESTAMP</span>
<span class="t" id="md3" style="left:644.8px;top:468.36px;font-size:13.3px;color:#5f6368;letter-spacing:0.026px;">NULLABLE</span>
<span class="t" id="ds3" style="left:744.25px;top:468.14px;font-size:13px;color:#5f6368;letter-spacing:1.425px;">注文日時</span>
<span class="t" id="d3_0" style="left:894.25px;top:467.6px;font-size:13px;color:#4a4d52;-webkit-text-stroke:0.3px #4a4d52;">-</span>
<span class="t" id="d3_1" style="left:954.25px;top:467.6px;font-size:13px;color:#4a4d52;-webkit-text-stroke:0.3px #4a4d52;">-</span>
<span class="t" id="d3_2" style="left:1014.25px;top:467.6px;font-size:13px;color:#4a4d52;-webkit-text-stroke:0.3px #4a4d52;">-</span>
<span class="t" id="d3_3" style="left:1130px;top:467.6px;font-size:13px;color:#4a4d52;-webkit-text-stroke:0.3px #4a4d52;">-</span>
<span class="t" id="d3_4" style="left:1270px;top:467.6px;font-size:13px;color:#4a4d52;-webkit-text-stroke:0.3px #4a4d52;">-</span>
<div class="b" style="left:326px;top:523px;width:1275px;height:1px;background:#dadce0"></div>
<span class="t" id="f4" style="left:402px;top:498.5px;font-size:14px;color:#202124;letter-spacing:0.533px;-webkit-text-stroke:0.3px #202124;">total_amount</span>
<span class="t" id="ty4" style="left:533.75px;top:498.36px;font-size:13.3px;color:#5f6368;letter-spacing:-0.339px;">INTEGER</span>
<span class="t" id="md4" style="left:644.8px;top:498.36px;font-size:13.3px;color:#5f6368;letter-spacing:0.026px;">NULLABLE</span>
<span class="t" id="ds4" style="left:744.25px;top:498.14px;font-size:13px;color:#5f6368;letter-spacing:1.425px;">合計金額</span>
<span class="t" id="d4_0" style="left:894.25px;top:497.6px;font-size:13px;color:#4a4d52;-webkit-text-stroke:0.3px #4a4d52;">-</span>
<span class="t" id="d4_1" style="left:954.25px;top:497.6px;font-size:13px;color:#4a4d52;-webkit-text-stroke:0.3px #4a4d52;">-</span>
<span class="t" id="d4_2" style="left:1014.25px;top:497.6px;font-size:13px;color:#4a4d52;-webkit-text-stroke:0.3px #4a4d52;">-</span>
<span class="t" id="d4_3" style="left:1130px;top:497.6px;font-size:13px;color:#4a4d52;-webkit-text-stroke:0.3px #4a4d52;">-</span>
<span class="t" id="d4_4" style="left:1270px;top:497.6px;font-size:13px;color:#4a4d52;-webkit-text-stroke:0.3px #4a4d52;">-</span>
<div class="b" style="left:346px;top:351px;width:16px;height:16px;border:2px solid #202124;border-radius:2.5px;background:#fff"></div>
<div class="b" style="left:346px;top:379px;width:16px;height:16px;border:2px solid #202124;border-radius:2.5px;background:#fff"></div>
<div class="b" style="left:346px;top:409.5px;width:16px;height:16px;border:2px solid #202124;border-radius:2.5px;background:#fff"></div>
<div class="b" style="left:346px;top:440px;width:16px;height:16px;border:2px solid #202124;border-radius:2.5px;background:#fff"></div>
<div class="b" style="left:346px;top:470px;width:16px;height:16px;border:2px solid #202124;border-radius:2.5px;background:#fff"></div>
<div class="b" style="left:346px;top:500px;width:16px;height:16px;border:2px solid #202124;border-radius:2.5px;background:#fff"></div>
<div class="b" style="left:326px;top:577px;width:122.2px;height:32px;background:#1066df;border-radius:4px"></div>
<span class="t" id="b1" style="left:336.5px;top:582.5px;font-size:14px;color:#fff;letter-spacing:0.15px;">スキーマの編集</span>
<div class="b" style="left:456px;top:577px;width:199px;height:32px;border:1px solid #3b7de0;border-radius:4px;background:#fff"></div>
<span class="t" id="b2" style="left:470px;top:582.5px;font-size:14px;color:#1166e0;letter-spacing:0.11px;">行アクセス ポリシーを表示</span>
</body></html>
